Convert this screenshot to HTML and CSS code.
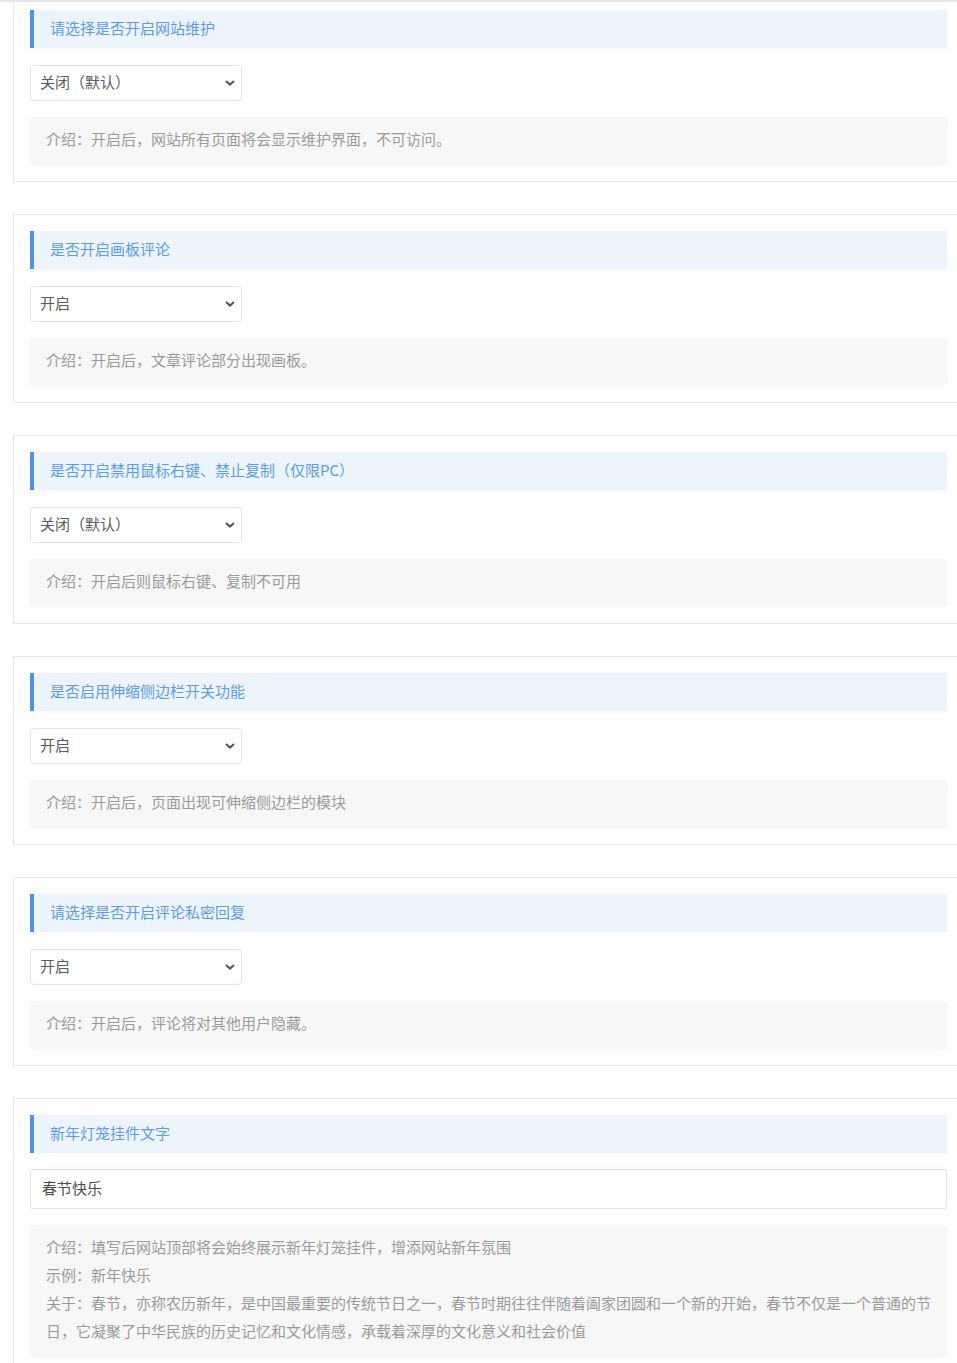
FILE: index.html
```html
<!DOCTYPE html>
<html lang="zh-CN">
<head>
    <meta charset="UTF-8">
    <meta name="viewport" content="width=device-width, initial-scale=1.0">
    <title>主题设置</title>
    <link rel="stylesheet" href="styles.css">
</head>

<body>
    <div id="topLine"></div>
    <div id="settings">
        <!--网站维护-->
        <div class="option">
            <div class="optionTitle">请选择是否开启网站维护</div>
            <select class="optionSelect">
                <option>关闭（默认）</option>
                <option>开启</option>
            </select>
            <div class="optionDesc">介绍：开启后，网站所有页面将会显示维护界面，不可访问。</div>
        </div>
        <!--画板评论-->
        <div class="option">
            <div class="optionTitle">是否开启画板评论</div>
            <select class="optionSelect">
                <option>开启</option>
                <option>关闭</option>
            </select>
            <div class="optionDesc">介绍：开启后，文章评论部分出现画板。</div>
        </div>
        <!--禁用右键-->
        <div class="option">
            <div class="optionTitle">是否开启禁用鼠标右键、禁止复制（仅限PC）</div>
            <select class="optionSelect">
                <option>关闭（默认）</option>
                <option>开启</option>
            </select>
            <div class="optionDesc">介绍：开启后则鼠标右键、复制不可用</div>
        </div>
        <!--伸缩侧边栏-->
        <div class="option">
            <div class="optionTitle">是否启用伸缩侧边栏开关功能</div>
            <select class="optionSelect">
                <option>开启</option>
                <option>关闭</option>
            </select>
            <div class="optionDesc">介绍：开启后，页面出现可伸缩侧边栏的模块</div>
        </div>
        <!--私密回复-->
        <div class="option">
            <div class="optionTitle">请选择是否开启评论私密回复</div>
            <select class="optionSelect">
                <option>开启</option>
                <option>关闭</option>
            </select>
            <div class="optionDesc">介绍：开启后，评论将对其他用户隐藏。</div>
        </div>
        <!--新年灯笼-->
        <div class="option">
            <div class="optionTitle">新年灯笼挂件文字</div>
            <input class="optionInput" type="text" value="春节快乐">
            <div class="optionDesc">介绍：填写后网站顶部将会始终展示新年灯笼挂件，增添网站新年氛围<br>示例：新年快乐<br>关于：春节，亦称农历新年，是中国最重要的传统节日之一，春节时期往往伴随着阖家团圆和一个新的开始，春节不仅是一个普通的节日，它凝聚了中华民族的历史记忆和文化情感，承载着深厚的文化意义和社会价值</div>
        </div>
    </div>
</body>

</html>
```

FILE: styles.css
```css
html, body {
    margin: 0;
    overflow-x: hidden;
}
body {
    background: #fff;
    font-family: "Noto Sans CJK SC", "Noto Sans", sans-serif;
    font-size: 15px;
}
#topLine {
    position: fixed;
    top: 0;
    left: 0;
    right: 0;
    height: 2px;
    background: #e6e6e6;
    z-index: 10;
}
#settings {
    display: flex;
    flex-direction: column;
    gap: 32px;
    margin-top: -7px;
    padding-left: 13px;
}
.option {
    display: flex;
    flex-direction: column;
    align-items: flex-start;
    box-sizing: border-box;
    width: 951px;
    padding: 16px;
    border: 1px solid #e6e6e6;
    background: #fff;
}
.optionTitle {
    box-sizing: border-box;
    width: 100%;
    height: 38px;
    line-height: 36px;
    padding: 0 0 2px 16px;
    border-left: 4px solid #4e92ee;
    background: #edf4fe;
    color: #5b9be9;
    box-shadow: 0 1px 4px rgba(80, 140, 220, 0.06);
    margin-bottom: 17px;
}
.optionSelect {
    appearance: none;
    box-sizing: border-box;
    width: 212px;
    height: 36px;
    padding: 0 24px 3px 9px;
    border: 1px solid #e4e4e4;
    border-radius: 4px;
    background: #fff url("data:image/svg+xml,%3Csvg xmlns='http://www.w3.org/2000/svg' width='10' height='6' viewBox='0 0 10 6'%3E%3Cpath d='M1 1l4 3.6L9 1' fill='none' stroke='%23555' stroke-width='2'/%3E%3C/svg%3E") no-repeat right 6px center;
    color: #5a5a5a;
    font-family: inherit;
    font-size: 15px;
    margin-bottom: 16px;
}
.optionInput {
    box-sizing: border-box;
    width: 100%;
    height: 40px;
    padding: 0 11px 3px;
    border: 1px solid #e4e4e4;
    border-radius: 2px;
    color: #4a4a4a;
    font-family: inherit;
    font-size: 15px;
    margin-top: -1px;
    margin-bottom: 16px;
}
.optionDesc {
    box-sizing: border-box;
    width: 100%;
    padding: 8px 10px 12px 16px;
    line-height: 28px;
    background: #f7f7f7;
    border-radius: 4px;
    color: #9b9b9b;
    box-shadow: 0 1px 4px rgba(0, 0, 0, 0.03);
}
```
